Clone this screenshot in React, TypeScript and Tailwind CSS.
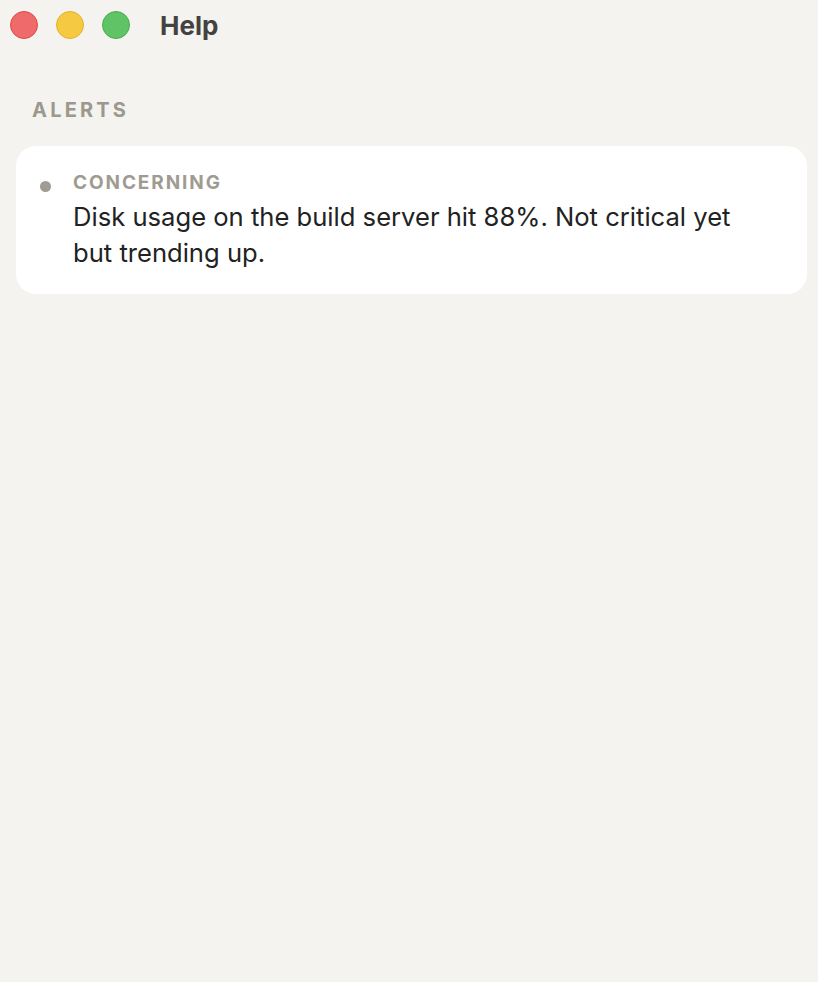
import React from 'react'

const alerts = [
  { level: 'Concerning', text: 'Disk usage on the build server hit 88%. Not critical yet but trending up.' },
]

export default function App() {
  return (
    <div className="min-h-[982px] w-[818px] bg-[#f4f3ef] font-['Inter','Liberation_Sans',Arial,sans-serif]">
      <div className="flex h-[50px] items-center pl-[10px]">
        <div className="flex items-center gap-[18px]">
          <span className="h-[28px] w-[28px] rounded-full border border-[#e04848] bg-[#ef6a6a]" />
          <span className="h-[28px] w-[28px] rounded-full border border-[#e3b12c] bg-[#f5c942]" />
          <span className="h-[28px] w-[28px] rounded-full border border-[#48ad50] bg-[#60c466]" />
        </div>
        <h1 className="ml-[30px] text-[26px] font-bold text-[#444240]">Help</h1>
      </div>

      <div className="pl-[16px] pr-[11px] pt-[47px]">
        <h2 className="pl-[16px] text-[20px] font-bold uppercase leading-[26px] tracking-[0.16em] text-[#9d988e]">Alerts</h2>
        <div className="mt-[23px] space-y-3">
          {alerts.map(a => (
            <div key={a.level} className="flex rounded-[20px] bg-white pb-[23px] pl-[24px] pr-[24px] pt-[26px]">
              <span className="mt-[9px] h-[11px] w-[11px] shrink-0 rounded-full bg-[#a19c93]" />
              <div className="ml-[22px]">
                <p className="text-[19px] font-bold uppercase leading-[22px] tracking-[0.1em] text-[#a09b91]">{a.level}</p>
                <p className="mt-[5px] max-w-[690px] text-[25.6px] leading-[36px] text-[#222222]">{a.text}</p>
              </div>
            </div>
          ))}
        </div>
      </div>
    </div>
  )
}
